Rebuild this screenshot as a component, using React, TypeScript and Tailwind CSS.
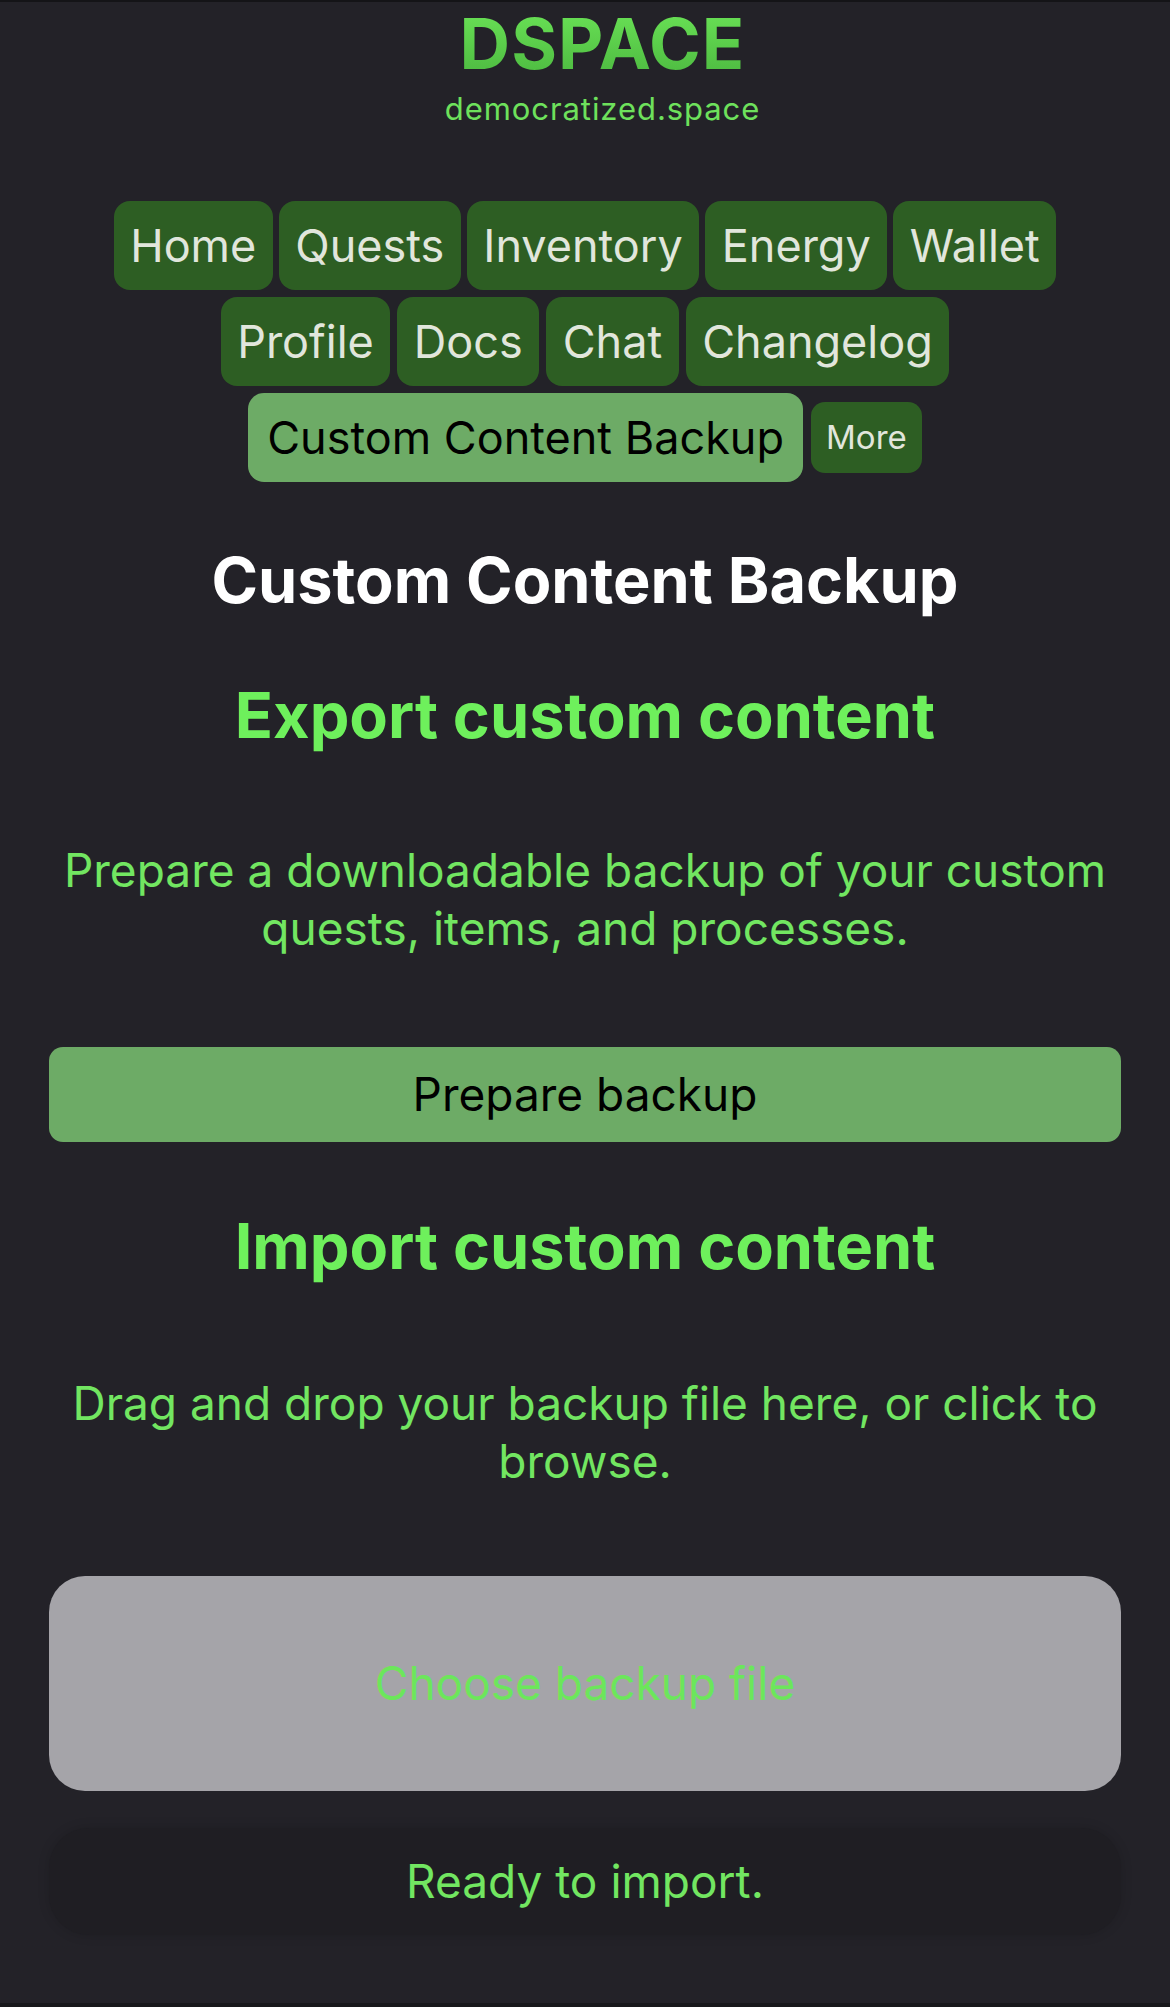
import React from "react";

const FONT = { fontFamily: "Inter, 'Noto Sans', 'Liberation Sans', sans-serif" };

function NavBtn({ label, active = false }: { label: string; active?: boolean }) {
  return (
    <div
      className={
        active
          ? "h-[89px] px-[19px] flex items-center rounded-[16px] bg-[#6dab66] text-black text-[45px] leading-none"
          : "h-[89px] px-[16.5px] flex items-center rounded-[16px] bg-[#2d5e23] text-[#e1e6dc] text-[45px] leading-none"
      }
    >
      {label}
    </div>
  );
}

export default function App() {
  return (
    <div
      className="min-h-[2007px] w-full bg-[#232228] border-t-[2px] border-[#141417] flex flex-col"
      style={FONT}
    >
      {/* header */}
      <div className="flex flex-col items-center pl-[35px] pt-[5.5px]">
        <div className="text-[70px] leading-[72px] font-bold tracking-[0.015em] bg-gradient-to-b from-[#6ae256] to-[#4cb940] bg-clip-text text-transparent">
          DSPACE
        </div>
        <div className="mt-[11px] text-[31px] leading-[36px] tracking-[0.03em] text-[#6ee15c]">
          democratized.space
        </div>
      </div>

      {/* nav */}
      <div className="mt-[74px] flex flex-col items-center gap-[7px]">
        <div className="flex gap-[6px]">
          <NavBtn label="Home" />
          <NavBtn label="Quests" />
          <NavBtn label="Inventory" />
          <NavBtn label="Energy" />
          <NavBtn label="Wallet" />
        </div>
        <div className="flex gap-[7px]">
          <NavBtn label="Profile" />
          <NavBtn label="Docs" />
          <NavBtn label="Chat" />
          <NavBtn label="Changelog" />
        </div>
        <div className="flex gap-[8px] items-center">
          <NavBtn label="Custom Content Backup" active />
          <div className="h-[71px] px-[15px] flex items-center rounded-[14px] bg-[#2d5e23] text-[#e1e6dc] text-[33px] leading-none">
            More
          </div>
        </div>
      </div>

      {/* main */}
      <div className="px-[49px] flex flex-col items-stretch text-center">
        <h1 className="mt-[62px] text-[63px] leading-[72px] font-bold text-white">
          Custom Content Backup
        </h1>

        <h2 className="mt-[63px] text-[63px] leading-[72px] font-bold text-[#6ef05c]">
          Export custom content
        </h2>
        <p className="mt-[90px] text-[46px] leading-[58px] text-[#72e661]">
          Prepare a downloadable backup of your custom
          <br />
          quests, items, and processes.
        </p>
        <div className="mt-[90px] h-[95px] rounded-[14px] bg-[#6dab66] flex items-center justify-center text-black text-[46px]">
          Prepare backup
        </div>

        <h2 className="mt-[68px] text-[63px] leading-[72px] font-bold text-[#6ef05c]">
          Import custom content
        </h2>
        <p className="mt-[92px] text-[46px] leading-[58px] text-[#72e661]">
          Drag and drop your backup file here, or click to
          <br />
          browse.
        </p>
        <div className="mt-[86px] h-[215px] rounded-[36px] bg-[#a5a4a9] flex items-center justify-center text-[#6ce65b] text-[46px]">
          Choose backup file
        </div>
        <div className="mt-[37px] h-[107px] rounded-[40px] bg-[#1f1e23] shadow-[0_0_12px_rgba(0,0,0,0.15)] flex items-center justify-center text-[#72e661] text-[46px]">
          Ready to import.
        </div>
      </div>
      <div className="flex-1" />
      <div className="h-[4px] bg-[#18181b]" />
    </div>
  );
}
